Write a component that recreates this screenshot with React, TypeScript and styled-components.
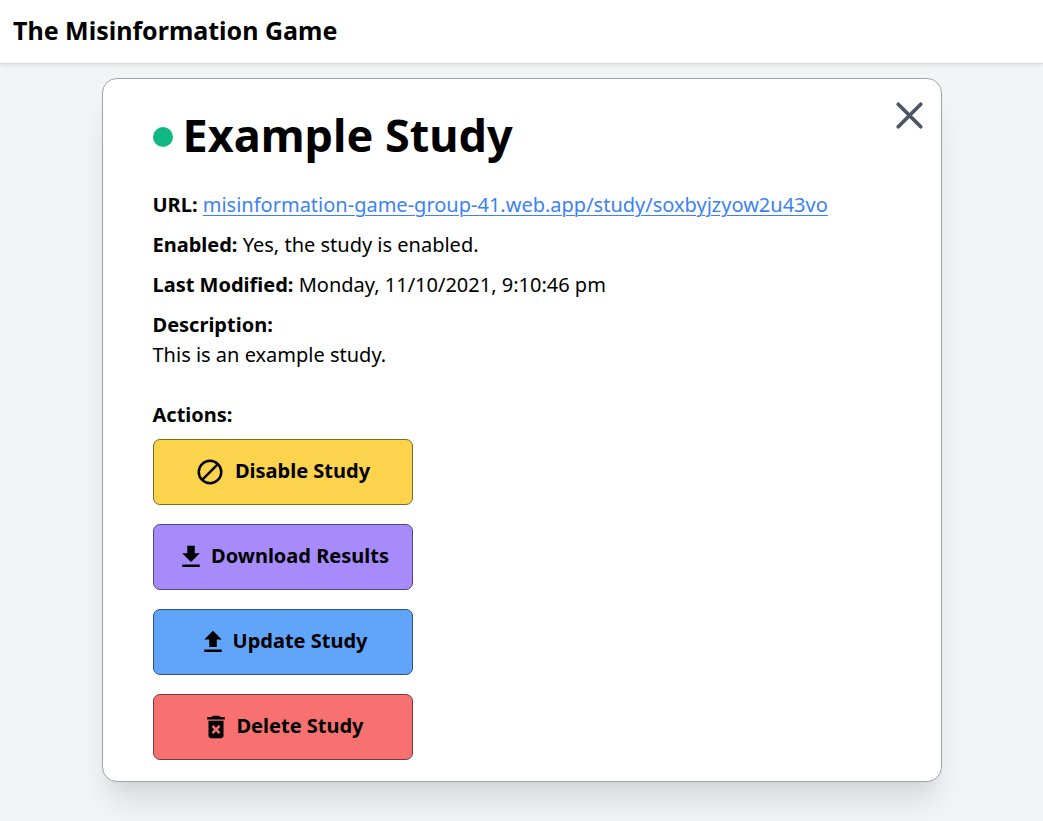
import React from "react";
import styled, { createGlobalStyle } from "styled-components";
import { HiOutlineX } from "react-icons/hi";
import { MdDeleteForever, MdDownload, MdUpload } from "react-icons/md";

const GlobalStyle = createGlobalStyle`
  *, *::before, *::after { box-sizing: border-box; }
  body {
    margin: 0;
    min-height: 100vh;
    background: #f3f4f6;
    color: #000;
    font-family: "Noto Sans", sans-serif;
    font-size: 20px;
    line-height: 30px;
  }
`;

const Header = styled.header`
  padding: 13px;
  height: 64px;
  background: #fff;
  border-bottom: 1px solid #d8d9db;
  box-shadow: 0 1px 4px rgba(0, 0, 0, 0.1);
`;

const SiteTitle = styled.h1`
  margin: 0;
  font-size: 25px;
  line-height: 35px;
  font-weight: 700;
`;

const Main = styled.main`
  padding: 14px 20px 40px;
`;

const Card = styled.article`
  position: relative;
  max-width: 840px;
  margin: 0 auto;
  padding: 31px 50px 21px;
  background: #fff;
  border: 1px solid #9ca3af;
  border-radius: 15px;
  box-shadow: 0 25px 31px -6px rgba(0, 0, 0, 0.1), 0 12px 12px -6px rgba(0, 0, 0, 0.04);
`;

const CloseButton = styled.button`
  position: absolute;
  top: 14px;
  right: 9px;
  display: flex;
  padding: 0;
  border: 0;
  background: none;
  color: #4b5563;
  cursor: pointer;
`;

const StudyTitle = styled.h2`
  display: flex;
  align-items: center;
  gap: 10px;
  margin: 0 0 30px;
  font-size: 45px;
  line-height: 50px;
  font-weight: 700;
`;

const StatusDot = styled.span`
  flex: none;
  width: 20px;
  height: 20px;
  margin-top: 4px;
  border-radius: 50%;
  background: #10b981;
`;

const Detail = styled.p`
  margin: 0 0 10px;
`;

const StudyLink = styled.a`
  color: #3b82f6;
  text-decoration: underline;
  text-decoration-thickness: 1px;
  text-underline-offset: 3px;
`;

const Description = styled.p`
  margin: 0 0 30px;
`;

const ActionsTitle = styled.h3`
  margin: 0 0 9px;
  font-size: 20px;
  line-height: 30px;
  font-weight: 700;
`;

const ActionList = styled.div`
  display: flex;
  flex-direction: column;
  gap: 19px;
  max-width: 260px;
`;

const ActionButton = styled.button<{ $color: string; $border: string; $gap?: number }>`
  display: flex;
  align-items: center;
  justify-content: center;
  gap: ${(p) => p.$gap ?? 5}px;
  padding: 15px 10px 17px;
  border: 1px solid ${(p) => p.$border};
  border-radius: 7px;
  background: ${(p) => p.$color};
  color: #000;
  font: inherit;
  font-weight: 700;
  cursor: pointer;

  svg {
    flex: none;
    margin-top: 2px;
  }
`;

function BlockIcon({ size }: { size: number }) {
  return (
    <svg width={size} height={size} viewBox="0 0 24 24" fill="none" stroke="currentColor" strokeWidth="2" aria-hidden="true">
      <circle cx="12" cy="12" r="9" />
      <path d="M5.7 18.3 18.3 5.7" />
    </svg>
  );
}

export default function App() {
  return (
    <>
      <GlobalStyle />
      <Header>
        <SiteTitle>The Misinformation Game</SiteTitle>
      </Header>
      <Main>
        <Card>
          <CloseButton type="button" aria-label="Close">
            <HiOutlineX size={45} />
          </CloseButton>
          <StudyTitle>
            <StatusDot />
            Example Study
          </StudyTitle>
          <Detail>
            <b>URL:</b>{" "}
            <StudyLink href="#study">misinformation-game-group-41.web.app/study/soxbyjzyow2u43vo</StudyLink>
          </Detail>
          <Detail>
            <b>Enabled:</b> Yes, the study is enabled.
          </Detail>
          <Detail>
            <b>Last Modified:</b> Monday, 11/10/2021, 9:10:46 pm
          </Detail>
          <Description>
            <b>Description:</b>
            <br />
            This is an example study.
          </Description>
          <ActionsTitle>Actions:</ActionsTitle>
          <ActionList>
            <ActionButton type="button" $color="#fcd34d" $border="#7e6a27" $gap={10}>
              <BlockIcon size={30} />
              Disable Study
            </ActionButton>
            <ActionButton type="button" $color="#a78bfa" $border="#54467d">
              <MdDownload size={30} />
              Download Results
            </ActionButton>
            <ActionButton type="button" $color="#60a5fa" $border="#30537d">
              <MdUpload size={30} />
              Update Study
            </ActionButton>
            <ActionButton type="button" $color="#f87171" $border="#7c3939">
              <MdDeleteForever size={30} />
              Delete Study
            </ActionButton>
          </ActionList>
        </Card>
      </Main>
    </>
  );
}
